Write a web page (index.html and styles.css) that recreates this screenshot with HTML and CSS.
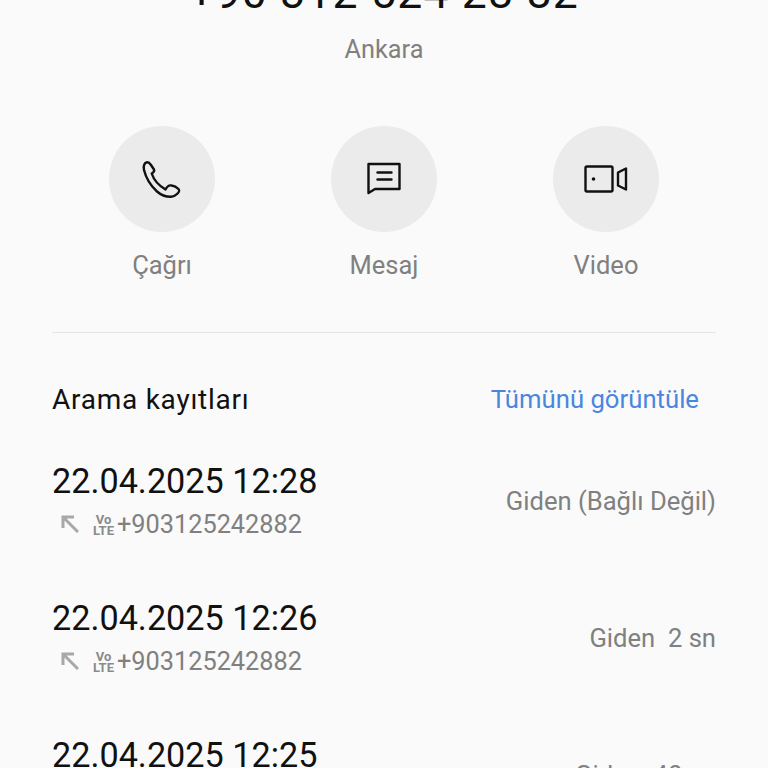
FILE: index.html
```html
<!DOCTYPE html>
<html lang="tr">
<head>
<meta charset="utf-8">
<title>Arama kayıtları</title>
<link rel="stylesheet" href="styles.css">
</head>
<body>
<main class="screen">
  <header class="head">
    <h1 class="number">+90 312 524 28 82</h1>
    <p class="city">Ankara</p>
  </header>
  <section class="actions">
    <div class="action">
      <div class="circle">
        <svg class="icon" viewBox="0 0 40 40" fill="none" stroke="#111" stroke-width="2.4" stroke-linejoin="round" stroke-linecap="round">
          <path d="M2 11 C1 7 2.5 3.5 5 3.2 C7 3 8 4.5 9 6 L12 10.5 C12.6 12 11.5 13.5 9.7 14.5 C11.5 20 16 26 23.5 30.5 C25 27.5 27.5 26 29.7 26.5 C32 26.8 35 28.5 36.5 30 C37.8 31.5 37 33.5 35 35 C33 37 31 38 28.5 37.8 C23 37.8 19 36 15 32.5 C9 27 4 19 2 11 Z"/>
        </svg>
      </div>
      <span class="label">Çağrı</span>
    </div>
    <div class="action">
      <div class="circle">
        <svg class="icon" viewBox="0 0 40 40" fill="none" stroke="#111" stroke-width="2.4" stroke-linejoin="round" stroke-linecap="round">
          <path d="M4.5 5 H35.5 V30 H11 L4.5 34 Z"/>
          <path d="M13.5 13.5 H27.5 M13.5 20.5 H27.5"/>
        </svg>
      </div>
      <span class="label">Mesaj</span>
    </div>
    <div class="action">
      <div class="circle">
        <svg class="icon-wide" viewBox="0 0 44 40" fill="none" stroke="#111" stroke-width="2.4" stroke-linejoin="round" stroke-linecap="round">
          <rect x="1.5" y="7.5" width="27" height="25" rx="1.5"/>
          <circle cx="9.5" cy="20" r="1.8" fill="#111" stroke="none"/>
          <path d="M34 13.5 L42 9.5 V30.5 L34 26.5 Z"/>
        </svg>
      </div>
      <span class="label">Video</span>
    </div>
  </section>
  <hr class="rule">
  <section class="log">
    <div class="log-head">
      <h2 class="log-title">Arama kayıtları</h2>
      <a class="log-all">Tümünü görüntüle</a>
    </div>
    <div class="row">
      <div>
        <div class="date">22.04.2025 12:28</div>
        <div class="meta">
          <svg class="arrow" viewBox="0 0 18 18" fill="none" stroke="#a8a8a8" stroke-width="3"><path d="M2 13 V2 H13 M2 2 L17 17"/></svg>
          <span class="volte"><span>Vo</span><span>LTE</span></span>
          <span class="tel">+903125242882</span>
        </div>
      </div>
      <div class="status">Giden (Bağlı Değil)</div>
    </div>
    <div class="row">
      <div>
        <div class="date">22.04.2025 12:26</div>
        <div class="meta">
          <svg class="arrow" viewBox="0 0 18 18" fill="none" stroke="#a8a8a8" stroke-width="3"><path d="M2 13 V2 H13 M2 2 L17 17"/></svg>
          <span class="volte"><span>Vo</span><span>LTE</span></span>
          <span class="tel">+903125242882</span>
        </div>
      </div>
      <div class="status">Giden&nbsp; 2 sn</div>
    </div>
    <div class="row">
      <div>
        <div class="date">22.04.2025 12:25</div>
        <div class="meta">
          <svg class="arrow" viewBox="0 0 18 18" fill="none" stroke="#a8a8a8" stroke-width="3"><path d="M2 13 V2 H13 M2 2 L17 17"/></svg>
          <span class="volte"><span>Vo</span><span>LTE</span></span>
          <span class="tel">+903125242882</span>
        </div>
      </div>
      <div class="status">Giden&nbsp; 40 sn</div>
    </div>
  </section>
</main>
</body>
</html>
```
FILE: styles.css
```css
html, body { margin: 0; padding: 0; background: #fafafa; }
body { font-family: Roboto, "Noto Sans", sans-serif; }
.screen { width: 768px; height: 768px; overflow: hidden; background: #fafafa; }
.head { display: flex; flex-direction: column; align-items: center; margin-top: -30px; }
.number { margin: 0; font-size: 44.5px; line-height: 46px; font-weight: 400; color: #111; letter-spacing: 1.2px; }
.city { margin: 19px 0 0; font-size: 25.3px; line-height: 30px; color: #808080; }
.actions { display: flex; justify-content: center; gap: 115px; margin-top: 61px; }
.action { width: 107px; display: flex; flex-direction: column; align-items: center; }
.circle { width: 106px; height: 106px; border-radius: 50%; background: #ebebeb; display: flex; align-items: center; justify-content: center; }
.icon { width: 40px; height: 40px; }
.icon-wide { width: 44px; height: 40px; }
.label { margin-top: 18px; font-size: 25.5px; line-height: 30px; color: #808080; }
.rule { border: 0; height: 1px; background: #e4e4e4; margin: 52px 52px 0; }
.log { padding: 0 52px; }
.log-head { display: flex; justify-content: space-between; align-items: center; margin-top: 50px; padding-right: 17px; }
.log-title { margin: 0; font-size: 28px; line-height: 34px; font-weight: 400; color: #111; letter-spacing: .75px; }
.log-all { font-size: 25.7px; line-height: 32px; color: #4a86e0; padding-bottom: 2px; }
.row { display: flex; justify-content: space-between; align-items: center; height: 137px; }
.log-head + .row { margin-top: 17px; }
.date { font-size: 34.2px; line-height: 40px; color: #111; margin-top: -4px; }
.meta { display: flex; align-items: center; margin-top: 8px; height: 32px; }
.arrow { width: 18px; height: 18px; margin-left: 9px; margin-top: -2px; }
.volte { display: flex; flex-direction: column; margin-left: 13px; width: 23px; font-size: 13px; line-height: 11px; font-weight: 700; color: #8a8a8a; align-items: center; }
.tel { margin-left: 2px; font-size: 25.3px; line-height: 32px; color: #808080; }
.status { font-size: 25.6px; line-height: 32px; color: #808080; margin-top: -4px; }
```
